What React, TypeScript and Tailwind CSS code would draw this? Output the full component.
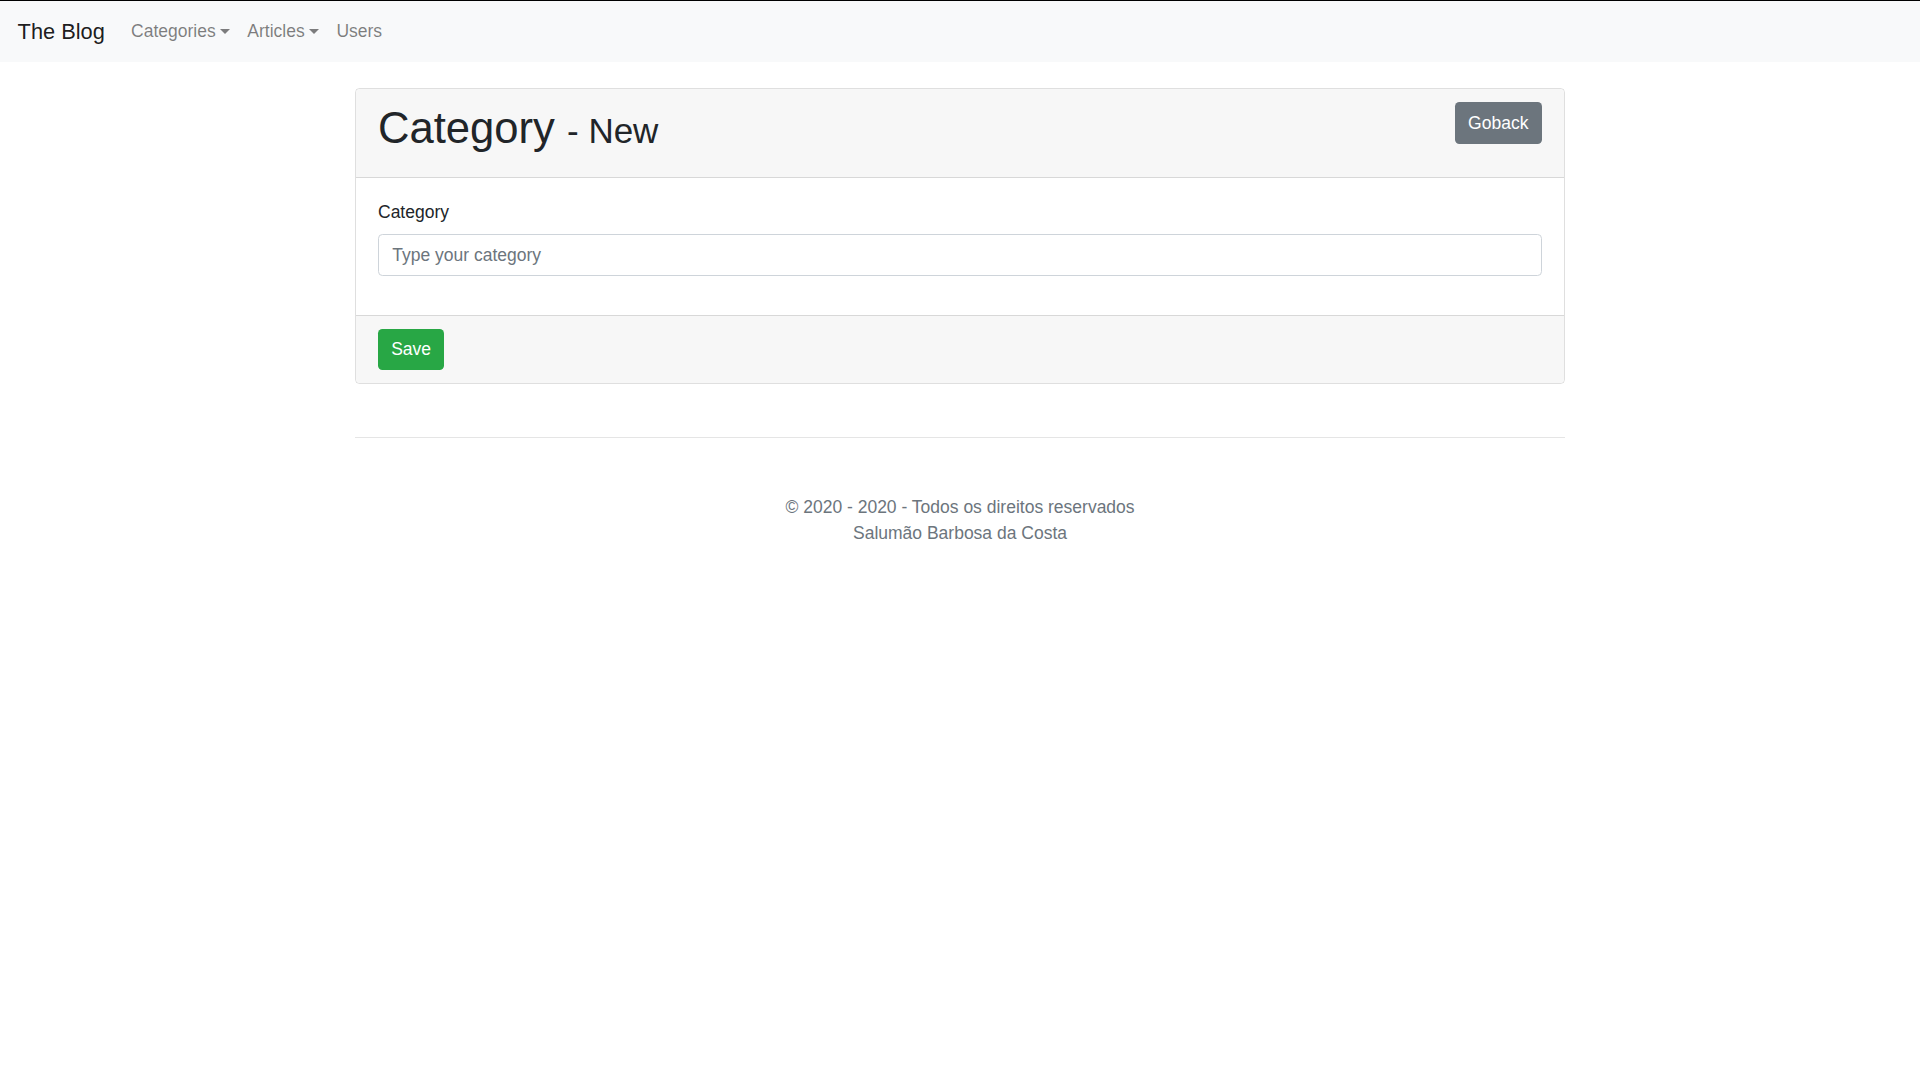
import React from "react";

function Caret() {
  return (
    <span className="ml-[4.5px] inline-block h-0 w-0 align-[3.5px] border-t-[5.3px] border-x-[5.3px] border-t-current border-x-transparent" />
  );
}

export default function App() {
  return (
    <div
      className="min-h-[1080px] bg-white text-[#212529] text-[17.5px] leading-[1.5]"
      style={{ fontFamily: '"Liberation Sans", Arial, Helvetica, sans-serif' }}
    >
      <nav className="border-t border-black bg-[#f8f9fa]">
        <div className="flex h-[61px] items-center px-[17.6px]">
          <a className="mr-[17.6px] text-[21.8px] leading-[33px] text-black/90">The Blog</a>
          <div className="flex items-center">
            <a className="flex items-center px-[8.6px] text-black/50">
              Categories
              <Caret />
            </a>
            <a className="flex items-center px-[8.6px] text-black/50">
              Articles
              <Caret />
            </a>
            <a className="px-[8.6px] text-black/50">Users</a>
          </div>
        </div>
      </nav>

      <main className="mx-auto mt-[26px] w-[1210px]">
        <div className="rounded-[4.4px] border border-black/[0.125]">
          <div className="flex items-start justify-between border-b border-black/[0.125] bg-[#f7f7f7] px-[22px] pt-[13.2px] pb-[13.2px] rounded-t-[4.4px]">
            <h1 className="mb-[8.8px] h-[52.8px] text-[43.6px] font-medium leading-[52.8px]">
              Category <span className="text-[35px] font-normal leading-none">- New</span>
            </h1>
            <button className="h-[42px] rounded-[4.4px] bg-[#6c757d] px-[13.6px] text-[17.5px] leading-[26.4px] text-white">
              Goback
            </button>
          </div>
          <div className="px-[22px] pt-[21px] pb-[21px]">
            <div className="mb-[17.6px]">
              <label className="mb-[8.8px] block">Category</label>
              <input
                className="block h-[42px] w-full rounded-[4.4px] border border-[#ced4da] px-[13.2px] text-[17.5px] text-[#495057] outline-none placeholder:text-[#6c757d]"
                placeholder="Type your category"
              />
            </div>
          </div>
          <div className="border-t border-black/[0.125] bg-[#f7f7f7] px-[22px] py-[13px] rounded-b-[4.4px]">
            <button className="h-[41px] rounded-[4.4px] bg-[#28a745] px-[13.2px] text-[17.5px] leading-[26.4px] text-white">
              Save
            </button>
          </div>
        </div>

        <hr className="mt-[53px] border-0 border-t border-black/10" />

        <footer className="mt-[56px] text-center text-[17.5px] leading-[26.4px] text-[#6c757d]">
          <div>© 2020 - 2020 - Todos os direitos reservados</div>
          <div>Salumão Barbosa da Costa</div>
        </footer>
      </main>
    </div>
  );
}
